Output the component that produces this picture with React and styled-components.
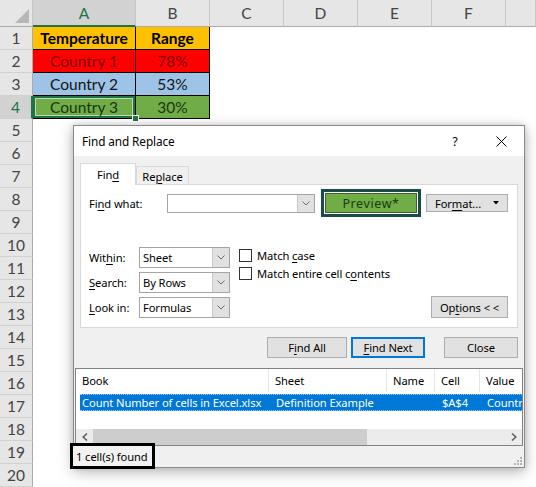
import React from 'react';
import styled, { createGlobalStyle, css } from 'styled-components';

const GlobalStyle = createGlobalStyle`
  html, body { margin: 0; padding: 0; background: #fff; }
  body { font-family: "Noto Sans", "Open Sans", sans-serif; }
  #root { width: 536px; height: 487px; overflow: hidden; }
  u { text-decoration: underline; text-underline-offset: 2px; }
`;

const Page = styled.div`
  position: relative;
  width: 536px;
  height: 487px;
  overflow: hidden;
`;

/* ---------- Spreadsheet ---------- */
const Sheet = styled.div`
  display: grid;
  grid-template-columns: 33px 103px 74px 74px 74px 74px 74px 30px;
  grid-template-rows: 27px repeat(20, 23px);
  font-family: Lato, "Liberation Sans", sans-serif;
  font-size: 15.5px;
`;

const Corner = styled.div`
  position: relative;
  background: #e6e6e6;
  box-sizing: border-box;
  border-right: 1px solid #c6c6c6;
  border-bottom: 1px solid #ababab;
  display: flex;
  align-items: flex-end;
  justify-content: flex-end;
  padding: 0 3px 3px 0;
`;

const ColHeader = styled.div`
  display: flex;
  align-items: center;
  justify-content: center;
  box-sizing: border-box;
  background: ${p => (p.$active ? '#d2d2d2' : '#e6e6e6')};
  color: ${p => (p.$active ? '#217346' : '#444')};
  border-right: 1px solid #c6c6c6;
  border-bottom: ${p => (p.$active ? '2px solid #217346' : '1px solid #ababab')};
  padding-top: ${p => (p.$active ? '1px' : '0')};
`;

const RowHeader = styled.div`
  display: flex;
  align-items: center;
  justify-content: center;
  box-sizing: border-box;
  background: ${p => (p.$active ? '#d2d2d2' : '#e6e6e6')};
  color: ${p => (p.$active ? '#217346' : '#444')};
  border-right: ${p => (p.$active ? '2px solid #217346' : '1px solid #ababab')};
  border-bottom: 1px solid #d0d0d0;
`;

const Cell = styled.div`
  position: relative;
  display: flex;
  align-items: center;
  justify-content: center;
  box-sizing: border-box;
  background: ${p => p.$bg || '#fff'};
  color: ${p => p.$color || '#000'};
  font-weight: ${p => (p.$bold ? 700 : 400)};
  ${p =>
    p.$boxed &&
    css`
      border-right: 1px solid #000;
      border-bottom: 1px solid #000;
    `}
  ${p =>
    p.$selected &&
    css`
      box-shadow: inset 0 0 0 2px #217346, inset 0 0 0 3px rgba(255, 255, 255, 0.55);
      z-index: 1;
    `}
`;

const FillHandle = styled.span`
  position: absolute;
  right: -4px;
  bottom: -4px;
  width: 5px;
  height: 5px;
  background: #217346;
  border: 1px solid #fff;
`;

/* ---------- Dialog ---------- */
const Dialog = styled.div`
  position: absolute;
  left: 73px;
  top: 125px;
  width: 452px;
  height: 343px;
  box-sizing: border-box;
  border: 1px solid #8a8a8a;
  background: #f0f0f0;
  box-shadow: 0 4px 14px rgba(0, 0, 0, 0.28), 0 0 6px rgba(0, 0, 0, 0.14);
  display: flex;
  flex-direction: column;
  font-family: "Noto Sans", "Open Sans", sans-serif;
  font-size: 11.2px;
  letter-spacing: -0.1px;
  color: #000;
  z-index: 5;
`;

const TitleBar = styled.div`
  height: 30px;
  flex: none;
  background: #fff;
  display: flex;
  align-items: center;
  padding-left: 8px;
`;

const Title = styled.div`
  flex: 1;
  font-size: 11.8px;
`;

const TitleButton = styled.div`
  width: 46px;
  height: 30px;
  display: flex;
  align-items: center;
  justify-content: center;
  font-size: 12px;
  color: #000;
`;

const Body = styled.div`
  padding: 7px 6px 0 6px;
  display: flex;
  flex-direction: column;
`;

const TabStrip = styled.div`
  height: 21px;
  display: flex;
  align-items: flex-end;
`;

const Tab = styled.div`
  position: relative;
  z-index: ${p => (p.$active ? 2 : 1)};
  box-sizing: border-box;
  width: ${p => p.$w}px;
  height: ${p => (p.$active ? 22 : 18)}px;
  margin-bottom: ${p => (p.$active ? '-1px' : '0')};
  background: ${p => (p.$active ? '#fff' : '#f0f0f0')};
  border: 1px solid #d9d9d9;
  border-bottom: none;
  display: flex;
  align-items: center;
  justify-content: center;
  padding-top: ${p => (p.$active ? '0' : '1px')};
`;

const Panel = styled.div`
  position: relative;
  z-index: 1;
  box-sizing: border-box;
  height: 144px;
  background: #fff;
  border: 1px solid #d9d9d9;
  padding: 4px 8px 0 8px;
  display: flex;
  flex-direction: column;
`;

const FindRow = styled.div`
  height: 28px;
  display: flex;
  align-items: center;
`;

const Label = styled.div`
  width: ${p => p.$w}px;
  flex: none;
  white-space: nowrap;
`;

const Combo = styled.div`
  box-sizing: border-box;
  width: ${p => p.$w}px;
  height: ${p => p.$h}px;
  border: 1px solid #a5a5a5;
  background: #fff;
  display: flex;
  flex: none;
`;

const ComboValue = styled.div`
  flex: 1;
  display: flex;
  align-items: center;
  padding-left: 3px;
  white-space: nowrap;
`;

const DropPart = styled.div`
  width: 16px;
  flex: none;
  background: #e1e1e1;
  border-left: 1px solid #c8c8c8;
  display: flex;
  align-items: center;
  justify-content: center;
`;

const PreviewFrame = styled.div`
  box-sizing: border-box;
  margin-left: 6px;
  width: 100px;
  height: 28px;
  border: 3px solid #1c4a4a;
  padding: 1px;
  background: #fff;
  display: flex;
`;

const PreviewButton = styled.div`
  flex: 1;
  background: #70ad47;
  border: 1px solid #3a6526;
  color: #1a3a0c;
  font-size: 12.5px;
  letter-spacing: 0.6px;
  display: flex;
  align-items: center;
  justify-content: center;
`;

const Button = styled.div`
  box-sizing: border-box;
  width: ${p => p.$w}px;
  height: ${p => p.$h || 21}px;
  flex: none;
  background: #e1e1e1;
  border: ${p => (p.$default ? '2px solid #0078d7' : '1px solid #adadad')};
  display: flex;
  align-items: center;
  justify-content: center;
  gap: ${p => p.$gap || 0}px;
  margin-left: ${p => p.$ml || 0}px;
  white-space: nowrap;
`;

const OptionsArea = styled.div`
  margin-top: 30px;
  display: flex;
  align-items: flex-start;
`;

const Fields = styled.div`
  display: grid;
  grid-template-columns: 50px 91px;
  grid-auto-rows: 21px;
  row-gap: 4px;
  align-items: center;
`;

const Checks = styled.div`
  margin-left: 9px;
  margin-top: 2px;
  display: flex;
  flex-direction: column;
  gap: 5px;
`;

const CheckRow = styled.div`
  display: flex;
  align-items: center;
  gap: 5px;
  height: 13px;
  white-space: nowrap;
`;

const CheckBox = styled.span`
  box-sizing: border-box;
  width: 13px;
  height: 13px;
  border: 1px solid #333;
  background: #fff;
  flex: none;
`;

const OptionsButton = styled(Button)`
  margin-left: auto;
  align-self: flex-end;
  margin-right: 1px;
`;

const ButtonRow = styled.div`
  margin-top: 9px;
  display: flex;
  justify-content: flex-end;
`;

const ResultList = styled.div`
  margin: 10px 1px 0 1px;
  box-sizing: border-box;
  height: 78px;
  border: 1px solid #828282;
  background: #fff;
  display: flex;
  flex-direction: column;
`;

const ListHeader = styled.div`
  height: 23px;
  display: grid;
  grid-template-columns: 193px 118px 48px 45px 1fr;
`;

const HeadCell = styled.div`
  display: flex;
  align-items: center;
  padding-left: 6px;
  border-right: 1px solid #e5e5e5;
  &:last-child { border-right: none; }
`;

const ListRow = styled.div`
  margin: 2px 0 0 4px;
  height: 17px;
  box-sizing: border-box;
  display: grid;
  grid-template-columns: 189px 118px 48px 45px 1fr;
  background: #0078d7;
  color: #fff;
  border-top: 1px dotted #9ccaf0;
  border-bottom: 1px dotted #9ccaf0;
  overflow: hidden;
`;

const RowCell = styled.div`
  display: flex;
  align-items: center;
  padding-left: ${p => p.$pl ?? 7}px;
  white-space: nowrap;
  overflow: hidden;
`;

const Spacer = styled.div`
  flex: 1;
`;

const ScrollBar = styled.div`
  height: 16px;
  display: flex;
  background: #ececec;
`;

const ScrollArrow = styled.div`
  width: 17px;
  display: flex;
  align-items: center;
  justify-content: center;
`;

const Track = styled.div`
  flex: 1;
  display: flex;
`;

const Thumb = styled.div`
  width: 274px;
  background: #cdcdcd;
`;

const StatusBar = styled.div`
  position: relative;
  flex: 1;
`;

const StatusNote = styled.div`
  position: absolute;
  left: -4px;
  top: -3px;
  box-sizing: border-box;
  width: 85px;
  height: 26px;
  border: 3px solid #000;
  background: #f2f2f2;
  display: flex;
  align-items: center;
  padding-left: 3px;
  white-space: nowrap;
  z-index: 3;
`;

const Grip = styled.svg`
  position: absolute;
  right: 2px;
  bottom: 2px;
`;

/* ---------- Icons ---------- */
const Chevron = () => (
  <svg width="8" height="5" viewBox="0 0 8 5">
    <path d="M0.5 0.5 L4 4 L7.5 0.5" fill="none" stroke="#6d6d6d" strokeWidth="1" />
  </svg>
);

const CloseX = () => (
  <svg width="11" height="11" viewBox="0 0 11 11">
    <path d="M0.5 0.5 L10.5 10.5 M10.5 0.5 L0.5 10.5" stroke="#000" strokeWidth="1" />
  </svg>
);

const ArrowLeft = () => (
  <svg width="6" height="8" viewBox="0 0 6 8">
    <path d="M5 0.5 L1.2 4 L5 7.5" fill="none" stroke="#606060" strokeWidth="1.6" />
  </svg>
);

const ArrowRight = () => (
  <svg width="6" height="8" viewBox="0 0 6 8">
    <path d="M1 0.5 L4.8 4 L1 7.5" fill="none" stroke="#606060" strokeWidth="1.6" />
  </svg>
);

const DropTriangle = () => (
  <svg width="6" height="4" viewBox="0 0 6 4">
    <path d="M0 0 H6 L3 3.5 Z" fill="#000" />
  </svg>
);

/* ---------- Data ---------- */
const columns = ['A', 'B', 'C', 'D', 'E', 'F', ''];

const tableData = {
  1: [
    { t: 'Temperature', bg: '#ffc000', bold: true },
    { t: 'Range', bg: '#ffc000', bold: true },
  ],
  2: [
    { t: 'Country 1', bg: '#ff0000', c: '#7c0000' },
    { t: '78%', bg: '#ff0000', c: '#7c0000' },
  ],
  3: [
    { t: 'Country 2', bg: '#9dc3e6', c: '#141414' },
    { t: '53%', bg: '#9dc3e6', c: '#141414' },
  ],
  4: [
    { t: 'Country 3', bg: '#70ad47', c: '#1c3410', sel: true },
    { t: '30%', bg: '#70ad47', c: '#1c3410' },
  ],
};

const rows = Array.from({ length: 20 }, (_, i) => i + 1);

export default function App() {
  return (
    <Page>
      <GlobalStyle />
      <Sheet>
        <Corner>
          <svg width="14" height="14" viewBox="0 0 14 14">
            <path d="M14 0 L14 14 L0 14 Z" fill="#b7b7b7" />
          </svg>
        </Corner>
        {columns.map((c, i) => (
          <ColHeader key={'h' + i} $active={c === 'A'}>
            {c}
          </ColHeader>
        ))}
        {rows.map(r => (
          <React.Fragment key={r}>
            <RowHeader $active={r === 4}>{r}</RowHeader>
            {columns.map((c, ci) => {
              const d = tableData[r] && tableData[r][ci];
              if (d) {
                return (
                  <Cell key={ci} $boxed $bg={d.bg} $color={d.c} $bold={d.bold} $selected={d.sel}>
                    {d.t}
                    {d.sel && <FillHandle />}
                  </Cell>
                );
              }
              return <Cell key={ci} />;
            })}
          </React.Fragment>
        ))}
      </Sheet>

      <Dialog>
        <TitleBar>
          <Title>Find and Replace</Title>
          <TitleButton>?</TitleButton>
          <TitleButton>
            <CloseX />
          </TitleButton>
        </TitleBar>
        <Body>
          <TabStrip>
            <Tab $active $w={56}>
              Fin<u>d</u>
            </Tab>
            <Tab $w={53}>
              Re<u>p</u>lace
            </Tab>
          </TabStrip>
          <Panel>
            <FindRow>
              <Label $w={78}>
                Fi<u>n</u>d what:
              </Label>
              <Combo $w={148} $h={19}>
                <ComboValue />
                <DropPart>
                  <Chevron />
                </DropPart>
              </Combo>
              <PreviewFrame>
                <PreviewButton>Preview*</PreviewButton>
              </PreviewFrame>
              <Button $w={82} $h={18} $ml={5} $gap={12}>
                <span>
                  For<u>m</u>at...
                </span>
                <DropTriangle />
              </Button>
            </FindRow>
            <OptionsArea>
              <Fields>
                <Label>
                  Wit<u>h</u>in:
                </Label>
                <Combo $w={91} $h={21}>
                  <ComboValue>Sheet</ComboValue>
                  <DropPart>
                    <Chevron />
                  </DropPart>
                </Combo>
                <Label>
                  <u>S</u>earch:
                </Label>
                <Combo $w={91} $h={21}>
                  <ComboValue>By Rows</ComboValue>
                  <DropPart>
                    <Chevron />
                  </DropPart>
                </Combo>
                <Label>
                  <u>L</u>ook in:
                </Label>
                <Combo $w={91} $h={21}>
                  <ComboValue>Formulas</ComboValue>
                  <DropPart>
                    <Chevron />
                  </DropPart>
                </Combo>
              </Fields>
              <Checks>
                <CheckRow>
                  <CheckBox />
                  <span>
                    Match <u>c</u>ase
                  </span>
                </CheckRow>
                <CheckRow>
                  <CheckBox />
                  <span>
                    Match entire cell c<u>o</u>ntents
                  </span>
                </CheckRow>
              </Checks>
              <OptionsButton $w={77} $h={22}>
                <span>
                  Op<u>t</u>ions &lt; &lt;
                </span>
              </OptionsButton>
            </OptionsArea>
          </Panel>
          <ButtonRow>
            <Button $w={80}>
              <span>
                F<u>i</u>nd All
              </span>
            </Button>
            <Button $w={74} $ml={4} $default>
              <span>
                <u>F</u>ind Next
              </span>
            </Button>
            <Button $w={74} $ml={19}>
              Close
            </Button>
          </ButtonRow>
        </Body>
        <ResultList>
          <ListHeader>
            <HeadCell>Book</HeadCell>
            <HeadCell>Sheet</HeadCell>
            <HeadCell>Name</HeadCell>
            <HeadCell>Cell</HeadCell>
            <HeadCell>Value</HeadCell>
          </ListHeader>
          <ListRow>
            <RowCell $pl={2}>Count Number of cells in Excel.xlsx</RowCell>
            <RowCell>Definition Example</RowCell>
            <RowCell />
            <RowCell>$A$4</RowCell>
            <RowCell>Country 3</RowCell>
          </ListRow>
          <Spacer />
          <ScrollBar>
            <ScrollArrow>
              <ArrowLeft />
            </ScrollArrow>
            <Track>
              <Thumb />
            </Track>
            <ScrollArrow>
              <ArrowRight />
            </ScrollArrow>
          </ScrollBar>
        </ResultList>
        <StatusBar>
          <StatusNote>1 cell(s) found</StatusNote>
          <Grip width="9" height="9" viewBox="0 0 9 9">
            <g fill="#b5b5b5">
              <rect x="7" y="1" width="2" height="2" />
              <rect x="4" y="4" width="2" height="2" />
              <rect x="7" y="4" width="2" height="2" />
              <rect x="1" y="7" width="2" height="2" />
              <rect x="4" y="7" width="2" height="2" />
              <rect x="7" y="7" width="2" height="2" />
            </g>
          </Grip>
        </StatusBar>
      </Dialog>
    </Page>
  );
}
